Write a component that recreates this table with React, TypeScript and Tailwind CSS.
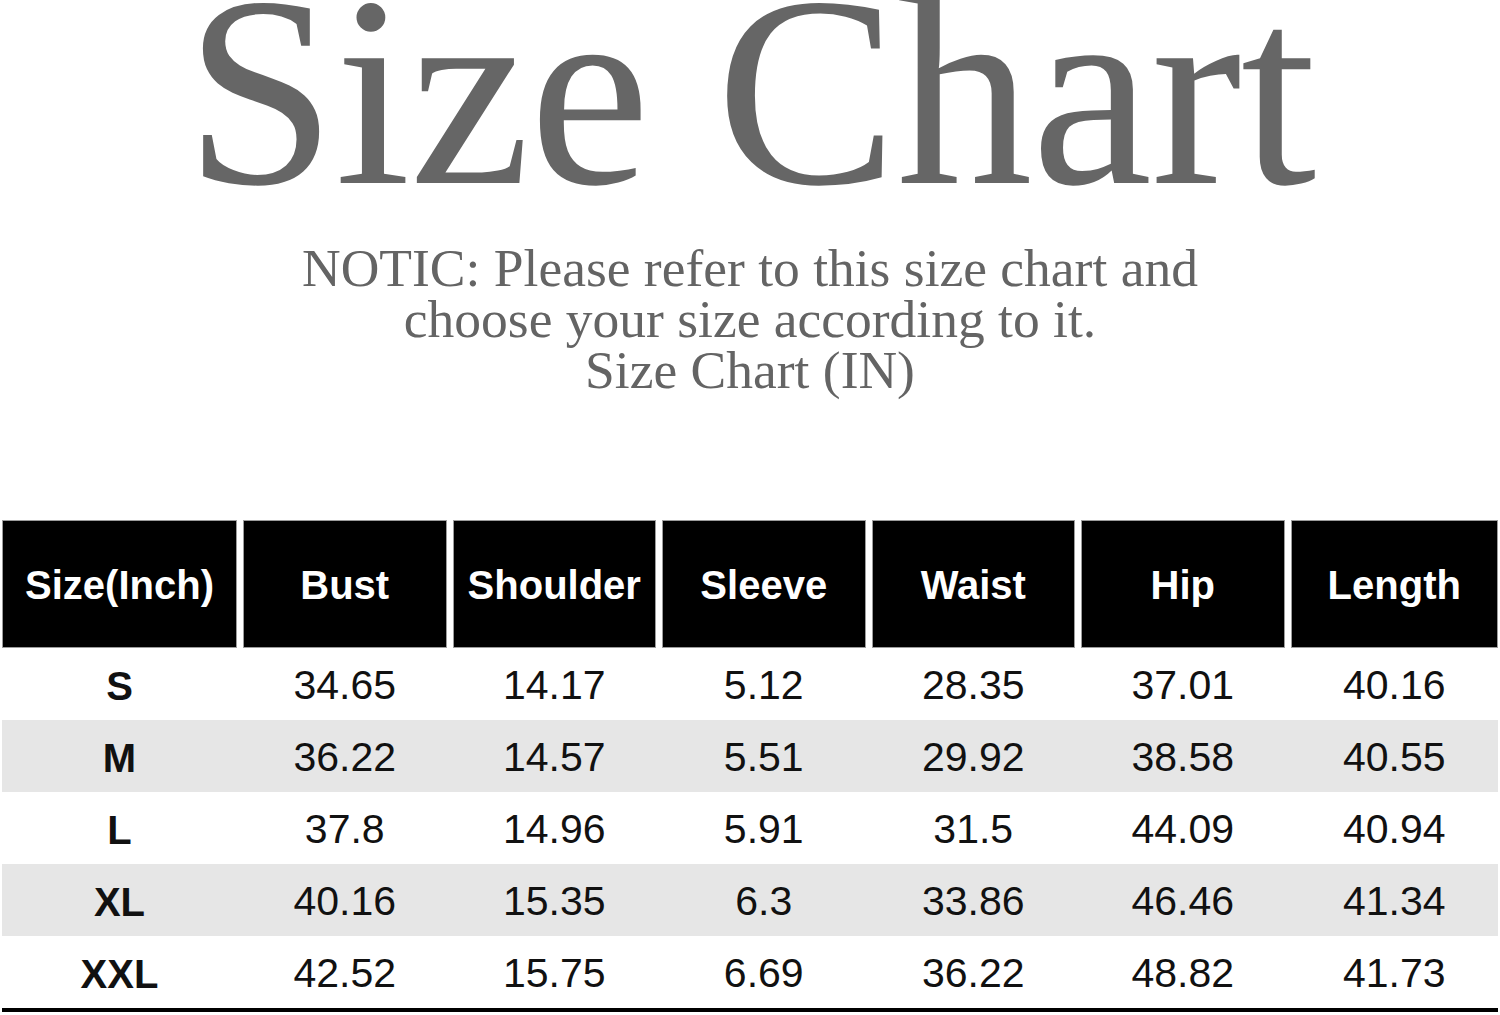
// Size chart
type Row = { size: string; values: string[] };

const HEADERS = ['Size(Inch)', 'Bust', 'Shoulder', 'Sleeve', 'Waist', 'Hip', 'Length'];

const ROWS: Row[] = [
  { size: 'S', values: ['34.65', '14.17', '5.12', '28.35', '37.01', '40.16'] },
  { size: 'M', values: ['36.22', '14.57', '5.51', '29.92', '38.58', '40.55'] },
  { size: 'L', values: ['37.8', '14.96', '5.91', '31.5', '44.09', '40.94'] },
  { size: 'XL', values: ['40.16', '15.35', '6.3', '33.86', '46.46', '41.34'] },
  { size: 'XXL', values: ['42.52', '15.75', '6.69', '36.22', '48.82', '41.73'] },
];

const grid = 'grid grid-cols-[235px_repeat(5,203.5px)_1fr] gap-x-[6px]';

export default function App() {
  return (
    <div className="h-[1015px] w-[1500px] overflow-hidden bg-white">
      <h1 className="text-center font-['Liberation_Serif',serif] text-[272px] leading-[0.68] tracking-[-1px] text-[#666666]">
        Size Chart
      </h1>

      <p className="mt-[58px] text-center font-['Liberation_Serif',serif] text-[53.5px] leading-[51px] text-[#646464]">
        NOTIC: Please refer to this size chart and
        <br />
        choose your size according to it.
        <br />
        Size Chart (IN)
      </p>

      <div className="mt-[124px] px-[2px] font-['Liberation_Sans',Arial,sans-serif]">
        <div className={grid}>
          {HEADERS.map((h) => (
            <div
              key={h}
              className="flex h-[128px] items-center justify-center border border-[#9c9c9c] bg-black pt-[2px] text-[40px] font-bold text-white"
            >
              {h}
            </div>
          ))}
        </div>

        {ROWS.map((r, i) => (
          <div
            key={r.size}
            className={[
              grid,
              'h-[72px] items-center pt-[4px]',
              i % 2 === 1 ? 'bg-[#e6e6e6]' : 'bg-white',
            ].join(' ')}
          >
            <div className="text-center text-[40px] font-bold text-[#111]">{r.size}</div>
            {r.values.map((v, idx) => (
              <div key={idx} className="text-center text-[41px] text-[#111]">
                {v}
              </div>
            ))}
          </div>
        ))}

        <div className="h-[4px] bg-black" />
      </div>
    </div>
  );
}
